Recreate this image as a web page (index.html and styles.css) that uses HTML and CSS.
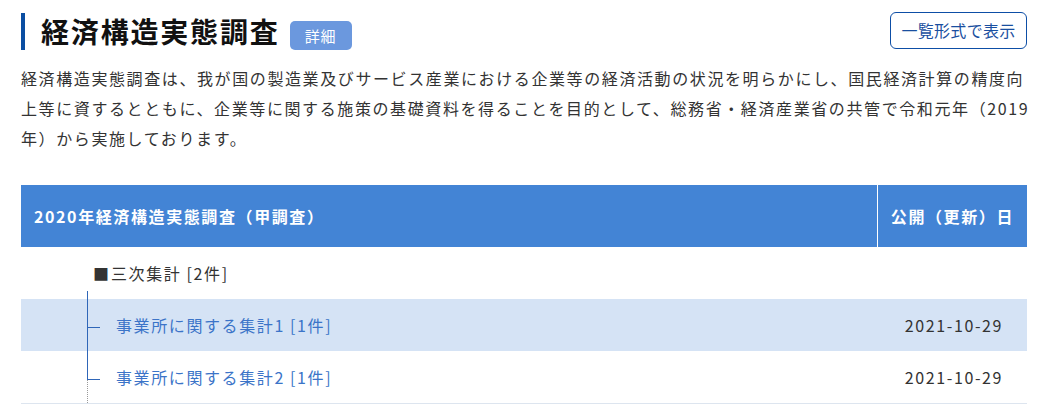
FILE: index.html
```html
<!DOCTYPE html>
<html lang="ja">
<head>
<meta charset="UTF-8">
<title>経済構造実態調査</title>
<link rel="stylesheet" href="styles.css">
</head>
<body>
<div class="pagina">
  <div class="cabecera">
    <div class="titulo">
      <h1>経済構造実態調査</h1>
      <span class="etiqueta">詳細</span>
    </div>
    <a href="#" class="boton">一覧形式で表示</a>
  </div>

  <p class="texto">経済構造実態調査は、我が国の製造業及びサービス産業における企業等の経済活動の状況を明らかにし、国民経済計算の精度向上等に資するとともに、企業等に関する施策の基礎資料を得ることを目的として、総務省・経済産業省の共管で令和元年（2019年）から実施しております。</p>

  <table class="tabla">
    <thead>
      <tr>
        <th>2020年経済構造実態調査（甲調査）</th>
        <th class="fecha">公開（更新）日</th>
      </tr>
    </thead>
    <tbody>
      <tr>
        <td class="grupo"><span class="cuadro">■</span>三次集計 [2件]</td>
        <td></td>
      </tr>
      <tr class="activa">
        <td class="hijo primero"><a href="#">事業所に関する集計1 [1件]</a></td>
        <td class="dia">2021-10-29</td>
      </tr>
      <tr>
        <td class="hijo ultimo"><a href="#">事業所に関する集計2 [1件]</a><span class="cola"></span></td>
        <td class="dia">2021-10-29</td>
      </tr>
    </tbody>
  </table>
</div>
</body>
</html>
```

FILE: styles.css
```css
body {
  margin: 0;
  padding: 0;
  background: #fff;
  color: #333;
  font-family: "Noto Sans CJK JP", "Noto Sans", sans-serif;
  letter-spacing: 0.1em;
}

.pagina {
  width: 1006px;
  padding: 12px 0 0 21px;
}

.cabecera {
  display: flex;
  justify-content: space-between;
  align-items: flex-start;
}

.titulo {
  display: flex;
  align-items: flex-end;
  height: 37px;
  border-left: 4px solid #0b4ea2;
  padding-left: 16px;
  margin-top: 1px;
}

.titulo h1 {
  margin: 0;
  font-size: 28px;
  line-height: 37px;
  font-weight: bold;
  color: #111;
  letter-spacing: 0.065em;
}

.etiqueta {
  margin-left: 10px;
  width: 62px;
  height: 29px;
  line-height: 29px;
  text-align: center;
  font-size: 15px;
  color: #fff;
  background-color: #6b98de;
  border-radius: 5px;
  letter-spacing: 0.05em;
}

.boton {
  display: block;
  width: 135px;
  height: 35px;
  line-height: 35px;
  text-align: center;
  font-size: 16px;
  color: #1a4fa0;
  border: 1px solid #0d4ea6;
  border-radius: 6px;
  text-decoration: none;
  letter-spacing: 0.02em;
}

.texto {
  margin: 13px -10px 0 0;
  font-size: 16px;
  line-height: 30px;
}

.tabla {
  width: 100%;
  margin-top: 32px;
  border-collapse: collapse;
  font-size: 16px;
}

.tabla th {
  height: 62px;
  padding: 0 13px;
  background-color: #4384d5;
  color: #fff;
  font-weight: bold;
  text-align: left;
  white-space: nowrap;
}

.tabla th.fecha {
  width: 123px;
  border-left: 1px solid #fff;
  text-align: center;
}

.tabla td {
  height: 52px;
  padding: 0;
  white-space: nowrap;
}

.tabla tbody tr:last-child td {
  border-bottom: 1px solid #dde5ef;
}

.activa td {
  background-color: #d5e3f5;
}

.grupo {
  padding-left: 72px !important;
}

.cuadro {
  letter-spacing: 0;
  margin-right: 2px;
}

.hijo {
  position: relative;
  padding-left: 95px !important;
}

.hijo a {
  color: #3b74c8;
  text-decoration: none;
}

.hijo::before {
  content: "";
  position: absolute;
  left: 66px;
  top: 0;
  height: 28px;
  border-left: 1px solid #2f66b8;
}

.hijo.primero::before {
  top: -8px;
  height: auto;
  bottom: 0;
}

.hijo::after {
  content: "";
  position: absolute;
  left: 66px;
  top: 28px;
  width: 13px;
  border-top: 1px solid #2f66b8;
}

.cola {
  position: absolute;
  left: 66px;
  top: 29px;
  bottom: 0;
  border-left: 1px dotted #999;
}

.dia {
  text-align: right;
  padding-right: 24px !important;
}
```
